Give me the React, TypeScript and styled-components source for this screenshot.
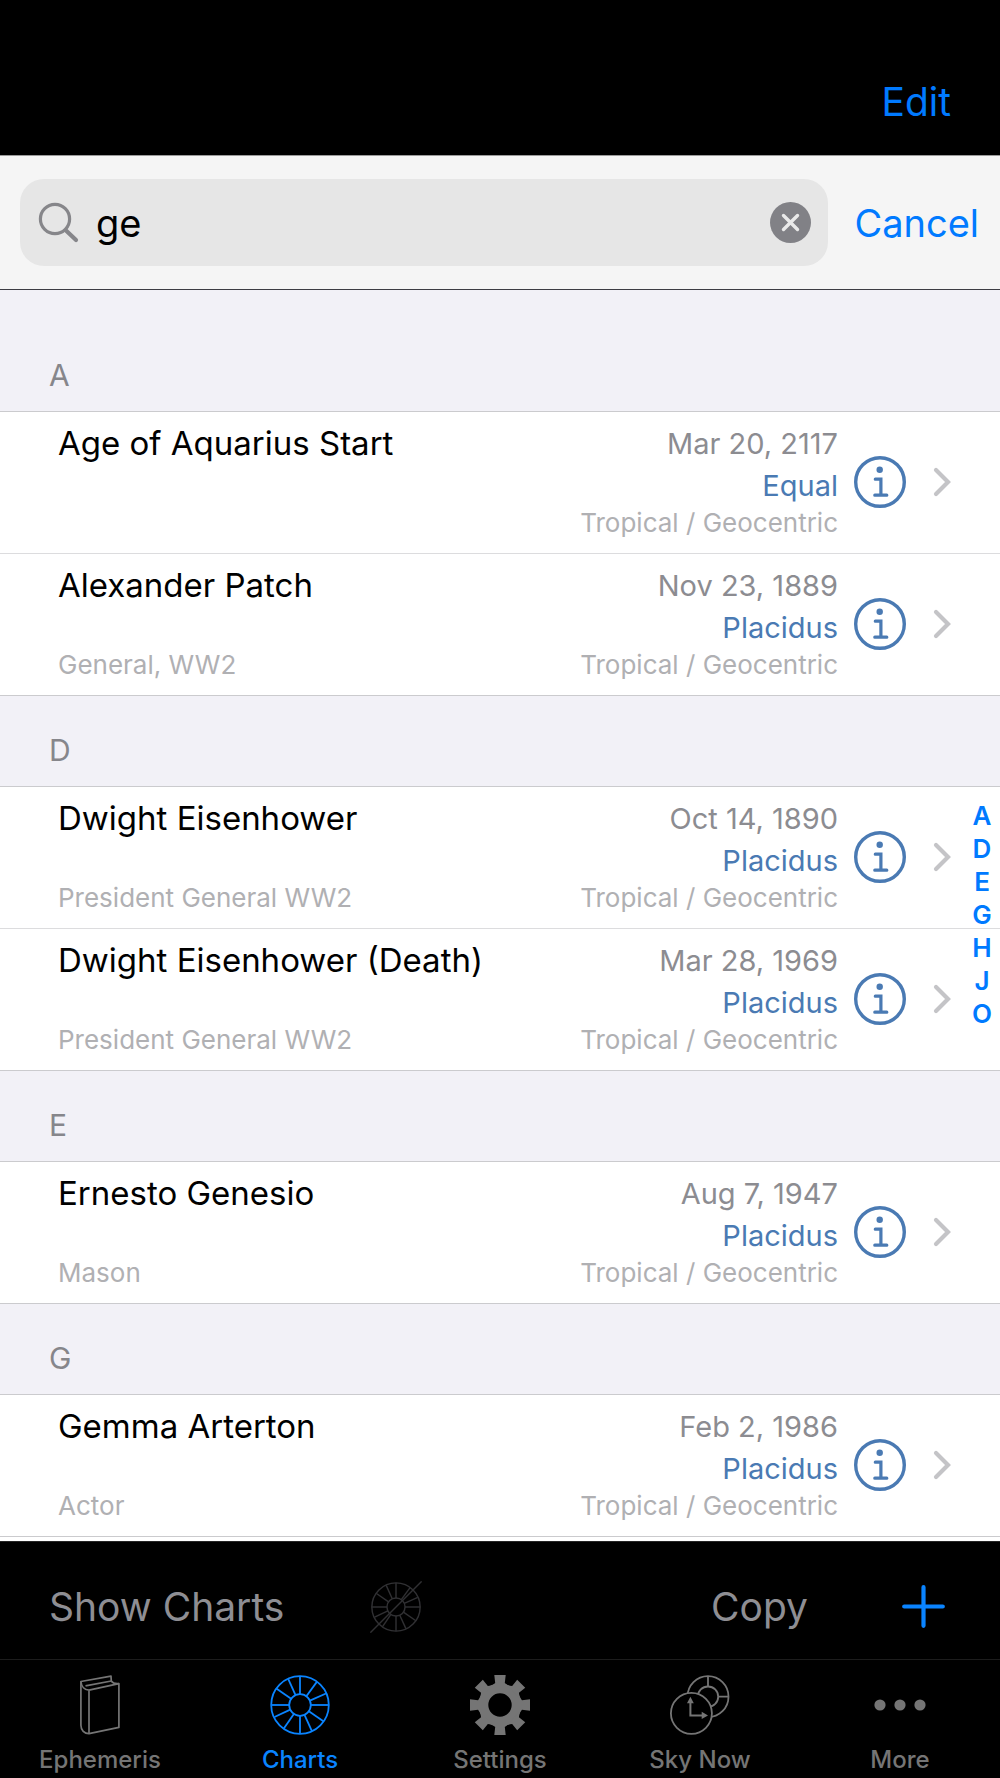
import React, { useState } from "react";
import styled, { createGlobalStyle } from "styled-components";

const GlobalStyle = createGlobalStyle`
  * { box-sizing: border-box; }
  body { margin: 0; background: #000; }
  button, input { font: inherit; color: inherit; border: 0; padding: 0; margin: 0; background: none; }
  button { cursor: pointer; }
  a { text-decoration: none; }
`;

const Screen = styled.div`
  display: flex;
  flex-direction: column;
  height: 100vh;
  font-family: Inter, "Liberation Sans", sans-serif;
  background: #000;
`;

const TopBar = styled.header`
  display: flex;
  justify-content: flex-end;
  align-items: flex-end;
  padding: 78px 49px 29px;
  border-bottom: 1px solid #9a9a9a;
`;

const TextButton = styled.button<{ $muted?: boolean }>`
  font-size: 39px;
  line-height: 48px;
  white-space: nowrap;
  color: ${(p) => (p.$muted ? "#8e8e93" : "#007aff")};
`;

const SearchBar = styled.form`
  display: flex;
  align-items: center;
  gap: 26px;
  padding: 23px 21px 23px 20px;
  background: #f5f5f5;
  border-bottom: 1px solid #3c3c43;

  & > ${TextButton} {
    font-size: 38px;
  }
`;

const SearchField = styled.label`
  flex: 1;
  min-width: 0;
  display: flex;
  align-items: center;
  gap: 16px;
  height: 87px;
  padding: 0 17px 0 18px;
  border-radius: 24px;
  background: #e6e6e6;
`;

const SearchInput = styled.input`
  flex: 1;
  min-width: 0;
  font-size: 38px;
  line-height: 48px;
  color: #000;
  outline: none;
`;

const IconButton = styled.button`
  display: flex;
  flex: none;
`;

const Results = styled.div`
  position: relative;
  flex: 1;
  min-height: 0;
  display: flex;
`;

const Scroller = styled.main`
  flex: 1;
  min-width: 0;
  overflow: hidden;
  background: #fff;

  & > section:first-child > h2 {
    padding-top: 65px;
  }
`;

const SectionTitle = styled.h2`
  margin: 0;
  padding: 34px 49px 16px;
  font-size: 30px;
  font-weight: 400;
  line-height: 40px;
  color: #86868b;
  background: #f2f1f7;
  border-bottom: 1px solid #cbcbce;
`;

const Rows = styled.ul`
  margin: 0;
  padding: 0;
  list-style: none;
`;

const Row = styled.li`
  display: flex;
  align-items: center;
  padding: 11px 49px 14px 58px;
  border-bottom: 1px solid #dcdcde;

  &:last-child {
    border-bottom-color: #cbcbce;
  }
`;

const Person = styled.div`
  flex: 1;
  min-width: 0;
  align-self: stretch;
  display: flex;
  flex-direction: column;
  justify-content: space-between;
`;

const Name = styled.span`
  font-size: 33px;
  line-height: 40px;
  color: #000;
`;

const Facts = styled.div`
  display: flex;
  flex-direction: column;
  align-items: flex-end;
`;

const Fact = styled.span<{ $accent?: boolean }>`
  font-size: 29px;
  line-height: 42px;
  color: ${(p) => (p.$accent ? "#4a7ab3" : "#8c8c91")};
`;

const Note = styled.span`
  font-size: 26px;
  line-height: 32px;
  color: #b0b0b3;
`;

const RowActions = styled.div`
  display: flex;
  align-items: center;
  gap: 27px;
  margin-left: 16px;
  padding-top: 2px;
`;

const IndexBar = styled.nav`
  position: absolute;
  top: 0;
  bottom: 0;
  right: 0;
  width: 36px;
  display: flex;
  flex-direction: column;
  justify-content: center;
  padding-bottom: 2px;
`;

const IndexLink = styled.a`
  font-size: 26px;
  font-weight: 600;
  line-height: 33px;
  text-align: center;
  color: #007aff;
`;

const Toolbar = styled.div`
  display: flex;
  align-items: center;
  gap: 86px;
  height: 118px;
  padding: 12px 55px 0 49px;
  border-top: 1px solid #262626;
`;

const ToolbarEnd = styled.div`
  display: flex;
  align-items: center;
  gap: 94px;
  margin-left: auto;
`;

const TabBar = styled.nav`
  display: grid;
  grid-template-columns: repeat(5, 1fr);
  border-top: 1px solid #1c1c1c;
`;

const Tab = styled.button<{ $active?: boolean }>`
  display: flex;
  flex-direction: column;
  align-items: center;
  gap: 10px;
  padding: 15px 0 3px;
  font-size: 24px;
  font-weight: 500;
  line-height: 30px;
  color: ${(p) => (p.$active ? "#0a84ff" : "#757575")};
`;

const SearchIcon = () => (
  <svg width="42" height="42" viewBox="0 0 42 42" fill="none" stroke="#86868a" strokeLinecap="round">
    <circle cx="17" cy="17" r="14.6" strokeWidth="3.2" />
    <path d="M28 28.5 38 38" strokeWidth="4.2" />
  </svg>
);

const ClearIcon = () => (
  <svg width="41" height="41" viewBox="0 0 41 41">
    <circle cx="20.5" cy="20.5" r="20.5" fill="#818186" />
    <path d="M13.5 13.5l14 14M27.5 13.5l-14 14" stroke="#e9e9e9" strokeWidth="3.4" strokeLinecap="round" />
  </svg>
);

const InfoIcon = () => (
  <svg width="52" height="52" viewBox="0 0 52 52" fill="none" stroke="#4a7ab3">
    <circle cx="26" cy="26" r="24.3" strokeWidth="3.4" />
    <circle cx="25.7" cy="13.7" r="3.2" fill="#4a7ab3" stroke="none" />
    <path d="M21.3 23.2h5.6v16M20.8 39.2h12" strokeWidth="3.2" strokeLinecap="round" />
  </svg>
);

const ChevronIcon = () => (
  <svg width="18" height="30" viewBox="0 0 18 30" fill="none" stroke="#c4c4c7" strokeWidth="4.2" strokeLinecap="round">
    <path d="M3 3l12 12L3 27" />
  </svg>
);

const PlusIcon = () => (
  <svg width="43" height="43" viewBox="0 0 43 43" stroke="#0a84ff" strokeWidth="4.2" strokeLinecap="round">
    <path d="M21.5 2.2v38.6M2.2 21.5h38.6" />
  </svg>
);

const SPOKES: [number, number][] = [
  [0, -29], [-11.7, -25.8], [-23.7, -16.4], [17, -23.4], [26, -11.5], [29, 0],
  [-29, 0], [-25.5, 12], [-16.2, 23.6], [0, 29], [11.8, 25.8], [23.7, 16.4],
];

const Wheel = () => (
  <>
    <circle cx="30" cy="30" r="28.8" />
    <circle cx="30" cy="30" r="10.8" />
    {SPOKES.map(([x, y]) => {
      const k = 10.8 / Math.hypot(x, y);
      return <path key={`${x},${y}`} d={`M${30 + x * k} ${30 + y * k}L${30 + x} ${30 + y}`} />;
    })}
  </>
);

const ChartsIcon = () => (
  <svg width="60" height="60" viewBox="0 0 60 60" fill="none" stroke="currentColor" strokeWidth="1.8">
    <Wheel />
  </svg>
);

const WheelOffIcon = () => (
  <svg width="52" height="52" viewBox="-1 -1 62 62" fill="none" stroke="#303033" strokeWidth="1.7">
    <Wheel />
    <path d="M-.6 60.6 60.6-.6" />
  </svg>
);

const BookIcon = () => (
  <svg width="60" height="60" viewBox="0 0 60 60" fill="none" stroke="currentColor" strokeWidth="1.7" strokeLinejoin="round">
    <path d="M10.9 6.5 41 1.2l.3 4.8c1.2 2 3.4 3 7.6 2.6v43.8L19 58.7c-4.6 0-8.1-3.6-8.1-8.4z" />
    <path d="M10.9 6.5c.5 5 3.7 8.5 8.1 8.7L48.9 8.6M19 15.2v43.5M15.5 10.9 41.3 6" />
  </svg>
);

const GearIcon = () => (
  <svg width="60" height="60" viewBox="0 0 60 60" fill="currentColor">
    <circle cx="30" cy="30" r="16.6" fill="none" stroke="currentColor" strokeWidth="9.8" />
    {[0, 45, 90, 135, 180, 225, 270, 315].map((a) => (
      <path key={a} d="M24.3 0h11.4l-.9 8 4 3H21.2l4-3z" transform={`rotate(${a} 30 30)`} />
    ))}
  </svg>
);

const SkyNowIcon = () => (
  <svg width="60" height="60" viewBox="0 0 60 60" fill="none" stroke="currentColor" strokeWidth="1.8">
    <circle cx="38" cy="21.7" r="20.5" />
    <circle cx="38" cy="21.7" r="10.2" />
    <path d="M38 1.2v10.3M48.2 21.7h10.3" />
    <circle cx="21.4" cy="38.3" r="20.5" fill="#000" />
    <path d="M20.4 27v13.4H33" strokeWidth="2" />
    <path d="M20.4 21.7l3.4 6.6H17zM38 40.4l-6.3 3.6v-7.2z" fill="currentColor" stroke="none" />
  </svg>
);

const MoreIcon = () => (
  <svg width="60" height="60" viewBox="0 0 60 60" fill="currentColor">
    <circle cx="10" cy="30" r="5.6" />
    <circle cx="30" cy="30" r="5.6" />
    <circle cx="50" cy="30" r="5.6" />
  </svg>
);

type Entry = { name: string; note?: string; date: string; house: string };

const SECTIONS: { letter: string; entries: Entry[] }[] = [
  {
    letter: "A",
    entries: [
      { name: "Age of Aquarius Start", date: "Mar 20, 2117", house: "Equal" },
      { name: "Alexander Patch", note: "General, WW2", date: "Nov 23, 1889", house: "Placidus" },
    ],
  },
  {
    letter: "D",
    entries: [
      { name: "Dwight Eisenhower", note: "President General WW2", date: "Oct 14, 1890", house: "Placidus" },
      { name: "Dwight Eisenhower (Death)", note: "President General WW2", date: "Mar 28, 1969", house: "Placidus" },
    ],
  },
  { letter: "E", entries: [{ name: "Ernesto Genesio", note: "Mason", date: "Aug 7, 1947", house: "Placidus" }] },
  { letter: "G", entries: [{ name: "Gemma Arterton", note: "Actor", date: "Feb 2, 1986", house: "Placidus" }] },
];

const INDEX = ["A", "D", "E", "G", "H", "J", "O"];

const TABS = [
  { label: "Ephemeris", Icon: BookIcon },
  { label: "Charts", Icon: ChartsIcon },
  { label: "Settings", Icon: GearIcon },
  { label: "Sky Now", Icon: SkyNowIcon },
  { label: "More", Icon: MoreIcon },
];

export default function App() {
  const [query, setQuery] = useState("ge");
  const [tab, setTab] = useState("Charts");

  return (
    <Screen>
      <GlobalStyle />
      <TopBar>
        <TextButton type="button">Edit</TextButton>
      </TopBar>
      <SearchBar onSubmit={(e) => e.preventDefault()}>
        <SearchField htmlFor="search">
          <SearchIcon />
          <SearchInput
            id="search"
            type="text"
            aria-label="Search"
            value={query}
            onChange={(e) => setQuery(e.target.value)}
          />
          <IconButton type="button" aria-label="Clear" onClick={() => setQuery("")}>
            <ClearIcon />
          </IconButton>
        </SearchField>
        <TextButton type="button">Cancel</TextButton>
      </SearchBar>

      <Results>
        <Scroller>
          {SECTIONS.map(({ letter, entries }) => (
            <section key={letter} id={letter}>
              <SectionTitle>{letter}</SectionTitle>
              <Rows>
                {entries.map((entry) => (
                  <Row key={entry.name}>
                    <Person>
                      <Name>{entry.name}</Name>
                      {entry.note && <Note>{entry.note}</Note>}
                    </Person>
                    <Facts>
                      <Fact>{entry.date}</Fact>
                      <Fact $accent>{entry.house}</Fact>
                      <Note>Tropical / Geocentric</Note>
                    </Facts>
                    <RowActions>
                      <IconButton type="button" aria-label={`About ${entry.name}`}>
                        <InfoIcon />
                      </IconButton>
                      <ChevronIcon />
                    </RowActions>
                  </Row>
                ))}
              </Rows>
            </section>
          ))}
        </Scroller>
        <IndexBar aria-label="Index">
          {INDEX.map((letter) => (
            <IndexLink key={letter} href={`#${letter}`}>
              {letter}
            </IndexLink>
          ))}
        </IndexBar>
      </Results>

      <Toolbar>
        <TextButton type="button" $muted>Show Charts</TextButton>
        <IconButton type="button" aria-label="Hide wheel">
          <WheelOffIcon />
        </IconButton>
        <ToolbarEnd>
          <TextButton type="button" $muted>Copy</TextButton>
          <IconButton type="button" aria-label="Add">
            <PlusIcon />
          </IconButton>
        </ToolbarEnd>
      </Toolbar>

      <TabBar>
        {TABS.map(({ label, Icon }) => (
          <Tab key={label} type="button" $active={tab === label} onClick={() => setTab(label)}>
            <Icon />
            {label}
          </Tab>
        ))}
      </TabBar>
    </Screen>
  );
}
